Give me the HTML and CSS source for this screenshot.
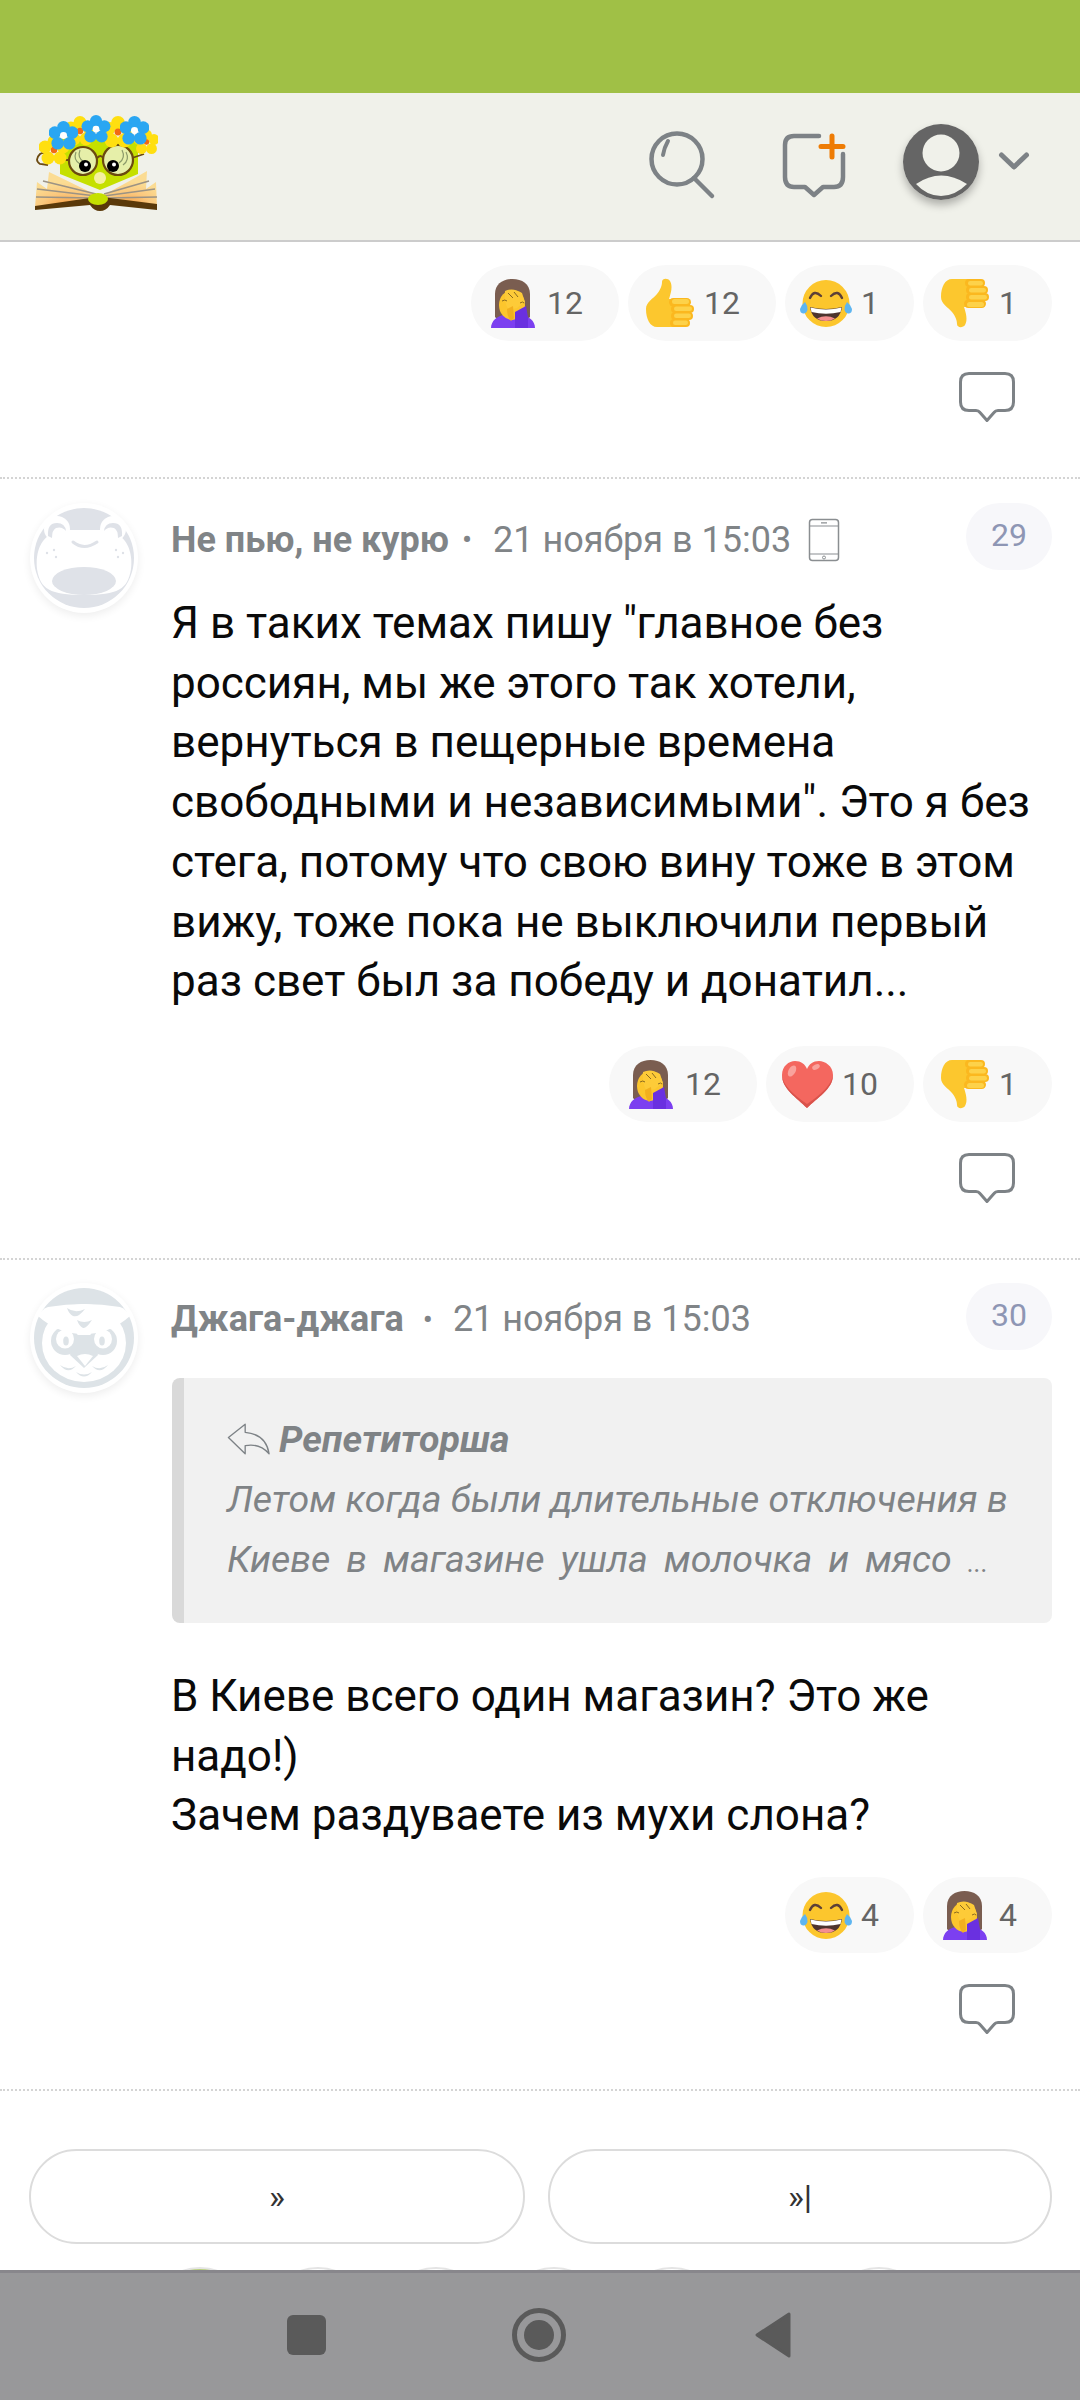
FILE: index.html
```html
<!DOCTYPE html>
<html lang="ru">
<head>
<meta charset="utf-8">
<title>Комментарии</title>
<link rel="stylesheet" href="styles.css">
</head>
<body>
<svg class="defs" aria-hidden="true">
  <defs>
    <radialGradient id="pageglow" cx="50%" cy="100%" r="70%">
      <stop offset="0" stop-color="#f79a3c"/><stop offset="0.55" stop-color="#fbc77c"/><stop offset="1" stop-color="#fbdc93"/>
    </radialGradient>
    <symbol id="flower-b" viewBox="0 0 30 30">
      <g fill="#2aa6f2">
        <circle cx="15" cy="6.5" r="6.5"/><circle cx="24" cy="12" r="6.5"/><circle cx="21" cy="23" r="6.5"/><circle cx="9" cy="23" r="6.5"/><circle cx="6" cy="12" r="6.5"/>
      </g>
      <circle cx="15" cy="15" r="3.6" fill="#fff"/>
    </symbol>
    <symbol id="flower-y" viewBox="0 0 30 30">
      <g fill="#ffdf10">
        <circle cx="15" cy="6.5" r="6.5"/><circle cx="24" cy="12" r="6.5"/><circle cx="21" cy="23" r="6.5"/><circle cx="9" cy="23" r="6.5"/><circle cx="6" cy="12" r="6.5"/>
      </g>
      <circle cx="15" cy="15" r="3.2" fill="#f26a12"/>
    </symbol>
    <symbol id="bubble" viewBox="0 0 56 50">
      <path d="M10 1.5H46Q54.5 1.5 54.5 10V30Q54.5 38.5 46 38.5H39Q36.5 38.5 35 40.5L28 48.5L21 40.5Q19.5 38.5 17 38.5H10Q1.5 38.5 1.5 30V10Q1.5 1.5 10 1.5Z" fill="none" stroke="#7d8286" stroke-width="3" stroke-linejoin="round"/>
    </symbol>
    <symbol id="e-face" viewBox="0 0 54 52">
      <path d="M10 40V17C10 7 18 2 27.500 2S45 7 45 17V40L42 43H13Z" fill="#7a5d50"/>
      <path d="M6 51C6 44 12 39 19 38H36C44 39 50 44 50 51Z" fill="#7c3ff0"/>
      <ellipse cx="27" cy="28" rx="13" ry="15" fill="#fcc62d"/>
      <path d="M20 14Q28 10 37 16L40 25Q35 28 32 31L24 33Q19 27 20 14Z" fill="#fdcb38"/>
      <path d="M22 32L28 29L29 41L26 44Q22 40 22 32Z" fill="#f2b01f"/>
      <path d="M30 35L41 29L43 40L43 51H30Z" fill="#6a30e0"/>
      <path d="M17 24q3 -2 5 0M35 26q3 -2 4 0M23 16l5 5M29 15l4 5" fill="none" stroke="#8a6a20" stroke-width="1"/>
    </symbol>
    <symbol id="e-up" viewBox="0 0 54 52">
      <path d="M4 32C4 25 11 22 15 17C19 12 20 8 20 5C20 1 26 1 28 4C31 9 29 16 27 22H36C38 22 38 49 36 50H15C8 50 4 42 4 32Z" fill="#fcc72e"/>
      <g fill="#fbb81f">
        <rect x="27" y="21" width="22" height="8.500" rx="4.200"/>
        <rect x="29" y="28" width="23" height="8" rx="4"/>
        <rect x="29" y="35" width="22" height="8" rx="4"/>
        <rect x="28" y="42" width="20" height="8" rx="4"/>
      </g>
      <g fill="#fdd24a">
        <rect x="30" y="22" width="17" height="5" rx="2.500"/>
        <rect x="32" y="29.500" width="18" height="4.500" rx="2.200"/>
        <rect x="32" y="36.500" width="17" height="4.500" rx="2.200"/>
        <rect x="31" y="43.500" width="15" height="4.500" rx="2.200"/>
      </g>
    </symbol>
    <symbol id="e-down" viewBox="0 0 54 52">
      <g transform="translate(0 52) scale(1 -1)"><use href="#e-up" width="54" height="52"/></g>
    </symbol>
    <symbol id="e-joy" viewBox="0 0 54 52">
      <circle cx="27" cy="26.500" r="23.500" fill="#fcc62d"/>
      <path d="M11 21Q15 12 22 19M32 19Q39 12 43 21" fill="none" stroke="#5d4037" stroke-width="2.400" stroke-linecap="round"/>
      <path d="M11 30Q27 34 43 30Q41 44 27 44Q13 44 11 30Z" fill="#4e342e"/>
      <path d="M11.500 30.500Q27 34.500 42.500 30.500L41.500 35Q27 38.500 12.500 35Z" fill="#fff"/>
      <path d="M18 41.500Q27 37 36 41.500Q32 44 27 44Q22 44 18 41.500Z" fill="#f58f8f"/>
      <path d="M1 32Q2 28 6 25Q9 29 8.500 33Q7 37 4 36.500Q1 36 1 32Z" fill="#5eb5f0"/>
      <path d="M53 32Q52 28 48 25Q45 29 45.500 33Q47 37 50 36.500Q53 36 53 32Z" fill="#5eb5f0"/>
    </symbol>
    <symbol id="e-heart" viewBox="0 0 54 52">
      <path d="M27 50C17 40 2 31 2 17C2 8 9 3 15 3C21 3 25 6 27 11C29 6 33 3 39 3C45 3 53 8 53 17C53 31 37 40 27 50Z" fill="#f4675f"/>
      <path d="M27 50C17 40 2 31 2 17Q3 30 27 46Q51 30 53 17C53 31 37 40 27 50Z" fill="#d9534c"/>
      <ellipse cx="12" cy="13" rx="3.500" ry="6" transform="rotate(30 12 13)" fill="#f9a29c"/>
      <ellipse cx="36" cy="9" rx="4" ry="2.500" transform="rotate(-25 36 9)" fill="#f9a29c"/>
    </symbol>
  </defs>
</svg>

<div class="statusbar"></div>

<header class="topbar">
  <svg class="logo" viewBox="24 23 124 96" width="124" height="96" role="img" aria-label="Логотип">
    <path d="M50 46H128V82L90 98L50 82Z" fill="#c5e000"/>
    <path d="M25 115L27 90L37 97L39 80Q60 90 88 104L90 112L80 108Z" fill="url(#pageglow)"/>
    <path d="M147 115L146 90L136 97L137 79Q118 90 92 104L90 112L100 108Z" fill="url(#pageglow)"/>
    <path d="M27 97L86 104M26 105L82 106M33 89L86 102M145 97L94 104M147 105L98 106M139 89L94 102" stroke="#9c9384" stroke-width="1.600" fill="none"/>
    <path d="M25 114L80 106Q90 104 100 106L147 112V118L100 113Q96 119 90 119Q84 119 80 113L25 118Z" fill="#5a390a"/>
    <ellipse cx="88" cy="107" rx="10" ry="6" fill="#c5e000"/>
    <ellipse cx="90" cy="86" rx="6" ry="6" fill="#f5f0a0"/>
    <path d="M59 68H47Q36 58 30 62Q24 68 30 72L38 73" fill="none" stroke="#6b4a10" stroke-width="1.800"/>
    <path d="M122 66L134 62" fill="none" stroke="#6b4a10" stroke-width="1.800"/>
    <circle cx="73" cy="69" r="14" fill="#e6efa9" stroke="#6b4a10" stroke-width="2.200"/>
    <circle cx="108" cy="68" r="15" fill="#e6efa9" stroke="#6b4a10" stroke-width="2.200"/>
    <path d="M87 66Q91 62 93 66" fill="none" stroke="#6b4a10" stroke-width="2"/>
    <path d="M66 60Q63 68 70 72M70 58Q67 66 74 70M112 58Q116 66 109 71M116 60Q120 68 113 73" fill="none" stroke="#8c9a6a" stroke-width="1.200"/>
    <circle cx="75" cy="74" r="6" fill="#000"/><circle cx="76" cy="72.500" r="2" fill="#fff"/>
    <circle cx="103" cy="74" r="6" fill="#000"/><circle cx="104" cy="72.500" r="2" fill="#fff"/>
    <use href="#flower-y" x="29" y="43" width="30" height="30"/>
    <use href="#flower-y" x="55" y="24" width="30" height="30"/>
    <use href="#flower-y" x="92" y="24" width="32" height="32"/>
    <use href="#flower-y" x="124" y="36" width="25" height="28"/>
    <use href="#flower-b" x="39" y="29" width="29" height="29"/>
    <use href="#flower-b" x="71" y="23" width="30" height="28"/>
    <use href="#flower-b" x="110" y="24" width="29" height="29"/>
  </svg>
  <div class="topbar-tools">
    <svg class="tool-search" viewBox="0 0 74 80" width="74" height="80" aria-hidden="true">
      <circle cx="32" cy="32" r="25.500" fill="none" stroke="#7d8286" stroke-width="4.500"/>
      <path d="M49 51L67 69" stroke="#7d8286" stroke-width="4.500" stroke-linecap="round"/>
      <path d="M18 28Q19 21 23 14" fill="none" stroke="#7d8286" stroke-width="4" stroke-linecap="round"/>
    </svg>
    <svg class="tool-new" viewBox="0 0 68 80" width="68" height="80" aria-hidden="true">
      <path d="M39 9H14Q5 9 5 18V50Q5 60 14 60H25L34 68L43 60H54Q63 60 63 50V27" fill="none" stroke="#7d8286" stroke-width="4.500" stroke-linecap="round" stroke-linejoin="round"/>
      <path d="M52 9V30M41 19.500H63" stroke="#ee7c05" stroke-width="5" stroke-linecap="round"/>
    </svg>
    <div class="tool-user">
      <svg class="user-pic" viewBox="0 0 76 76" width="76" height="76" aria-hidden="true">
        <circle cx="38" cy="38" r="38" fill="#656565"/>
        <circle cx="38" cy="29" r="18.500" fill="#f0f1ea"/>
        <path d="M13 60Q38 43 64 60Q52 72 38 72Q24 72 13 60Z" fill="#f0f1ea"/>
      </svg>
    </div>
    <svg class="tool-chevron" viewBox="0 0 36 24" width="36" height="24" aria-hidden="true">
      <path d="M5.500 5L18 17L30.500 5" fill="none" stroke="#7d8286" stroke-width="5" stroke-linecap="round" stroke-linejoin="round"/>
    </svg>
  </div>
</header>

<main>
  <section class="tail">
    <div class="reactions">
      <span class="pill pill-wide"><svg class="emoji"><use href="#e-face"/></svg><span class="cnt">12</span></span>
      <span class="pill pill-wide"><svg class="emoji"><use href="#e-up"/></svg><span class="cnt">12</span></span>
      <span class="pill"><svg class="emoji"><use href="#e-joy"/></svg><span class="cnt">1</span></span>
      <span class="pill"><svg class="emoji"><use href="#e-down"/></svg><span class="cnt">1</span></span>
    </div>
    <div class="reply"><svg class="bubble"><use href="#bubble"/></svg></div>
  </section>

  <article class="comment">
    <div class="ava">
      <svg viewBox="0 0 108 110" width="108" height="110" aria-hidden="true">
        <circle cx="54" cy="55" r="50" fill="#dfe2e8"/>
        <path d="M7 66C5 48 12 36 20 32L30 27H78L88 32C96 36 103 48 101 66C98 86 88 92 54 92C20 92 10 86 7 66Z" fill="#fff"/>
        <circle cx="27" cy="26" r="13" fill="#fff"/><circle cx="83" cy="26" r="13" fill="#fff"/>
        <path d="M18 33Q17 20 27 20Q35 20 36 28Q32 23 26 25Q22 27 22 35Z" fill="#dfe2e8"/>
        <path d="M92 33Q93 20 83 20Q75 20 74 28Q78 23 84 25Q88 27 88 35Z" fill="#dfe2e8"/>
        <path d="M43 39Q54 48 67 39" fill="none" stroke="#dfe2e8" stroke-width="3" stroke-linecap="round"/>
        <ellipse cx="54" cy="78" rx="32" ry="14" fill="#dfe2e8"/>
        <g fill="#dfe2e8"><circle cx="17" cy="50" r="1.200"/><circle cx="24" cy="47" r="1.200"/><circle cx="26" cy="54" r="1.200"/><circle cx="93" cy="50" r="1.200"/><circle cx="86" cy="47" r="1.200"/><circle cx="88" cy="54" r="1.200"/></g>
      </svg>
    </div>
    <div class="main">
      <div class="head">
        <div class="meta"><b class="name">Не пью, не курю</b><span class="dot dot-a">•</span><span class="date">21 ноября в 15:03</span>
          <svg class="phone" viewBox="0 0 32 44" width="32" height="44" aria-hidden="true">
            <rect x="1.500" y="1.500" width="29" height="41" rx="3" fill="none" stroke="#8a8e91" stroke-width="1.500"/>
            <path d="M2 8H30M2 36H30M13 4.800H19" stroke="#8a8e91" stroke-width="1.200" fill="none"/>
            <circle cx="16" cy="39.500" r="1.500" fill="none" stroke="#8a8e91"/>
          </svg>
        </div>
        <span class="num">29</span>
      </div>
      <p class="text">Я в таких темах пишу "главное без<br>россиян, мы же этого так хотели,<br>вернуться в пещерные времена<br>свободными и независимыми". Это я без<br>стега, потому что свою вину тоже в этом<br>вижу, тоже пока не выключили первый<br>раз свет был за победу и донатил...</p>
      <div class="reactions reactions-in">
        <span class="pill pill-wide"><svg class="emoji"><use href="#e-face"/></svg><span class="cnt">12</span></span>
        <span class="pill pill-wide"><svg class="emoji"><use href="#e-heart"/></svg><span class="cnt">10</span></span>
        <span class="pill"><svg class="emoji"><use href="#e-down"/></svg><span class="cnt">1</span></span>
      </div>
      <div class="reply reply-in"><svg class="bubble"><use href="#bubble"/></svg></div>
    </div>
  </article>

  <article class="comment comment-quoted">
    <div class="ava">
      <svg viewBox="0 0 108 110" width="108" height="110" aria-hidden="true">
        <circle cx="54" cy="55" r="50" fill="#dde3e7"/>
        <ellipse cx="54" cy="60" rx="42" ry="39" fill="#fff"/>
        <circle cx="35" cy="58" r="14" fill="#dde3e7"/>
        <circle cx="73" cy="58" r="14" fill="#dde3e7"/>
        <path d="M46 52H62L68 72L54 85L40 72Z" fill="#dde3e7"/>
        <ellipse cx="35" cy="56" rx="9" ry="9.500" fill="#fff"/>
        <ellipse cx="73" cy="56" rx="9" ry="9.500" fill="#fff"/>
        <ellipse cx="36" cy="58" rx="2.800" ry="4.500" fill="#dde3e7"/>
        <ellipse cx="72" cy="58" rx="2.800" ry="4.500" fill="#dde3e7"/>
        <path d="M47 73Q55 69 63 73L55 83Z" fill="#fff"/>
        <path d="M30 82Q38 88 46 83Q38 92 30 82ZM62 83Q70 88 78 82Q70 92 62 83ZM46 89Q54 94 62 89Q54 98 46 89Z" fill="#dde3e7"/>
        <path d="M8 33Q12 26 18 24Q54 18 90 24Q96 26 100 33Q80 51 54 51Q28 51 8 33Z" fill="#fff"/>
        <path d="M37 25Q45 31 55 26Q48 35 43 33Q39 31 37 25ZM47 37Q54 41 62 37Q56 46 53 45Q49 43 47 37Z" fill="#dde3e7"/>
      </svg>
    </div>
    <div class="main">
      <div class="head">
        <div class="meta"><b class="name">Джага-джага</b><span class="dot dot-b">•</span><span class="date">21 ноября в 15:03</span></div>
        <span class="num">30</span>
      </div>
      <blockquote class="quote">
        <div class="q-author">
          <svg class="q-arrow" viewBox="0 0 46 34" width="44" height="34" aria-hidden="true">
            <path d="M19 1.500L1.500 15.500L19 32.500V24Q34 21 44 32.500Q41 12 19 10Z" fill="none" stroke="#7d8286" stroke-width="1.400" stroke-linejoin="round"/>
          </svg><i>Репетиторша</i>
        </div>
        <div class="q-line">Летом когда были длительные отключения в</div>
        <div class="q-line q-spread">Киеве в магазине ушла молочка и мясо <span class="q-more">...</span></div>
      </blockquote>
      <p class="text text-after">В Киеве всего один магазин? Это же<br>надо!)<br>Зачем раздуваете из мухи слона?</p>
      <div class="reactions reactions-tight">
        <span class="pill"><svg class="emoji"><use href="#e-joy"/></svg><span class="cnt">4</span></span>
        <span class="pill"><svg class="emoji"><use href="#e-face"/></svg><span class="cnt">4</span></span>
      </div>
      <div class="reply reply-in"><svg class="bubble"><use href="#bubble"/></svg></div>
    </div>
  </article>

  <nav class="pager">
    <a class="pg pg-next">»</a>
    <a class="pg pg-last">»|</a>
  </nav>

  <div class="peek">
    <span class="peek-ava peek-green"></span><span class="peek-ava"></span><span class="peek-ava"></span><span class="peek-ava"></span><span class="peek-ava"></span><span class="peek-ava peek-far"></span>
  </div>
</main>

<footer class="sysnav">
  <svg class="sys-square" viewBox="0 0 40 40" width="40" height="40" aria-hidden="true"><rect width="39" height="40" rx="6" fill="#5a5a5a"/></svg>
  <svg class="sys-home" viewBox="0 0 54 54" width="54" height="54" aria-hidden="true"><circle cx="27" cy="27" r="24.500" fill="none" stroke="#5a5a5a" stroke-width="5"/><circle cx="27" cy="27" r="15" fill="#5a5a5a"/></svg>
  <svg class="sys-back" viewBox="0 0 36 46" width="36" height="46" aria-hidden="true"><path d="M34 2V44L2 23Z" fill="#5a5a5a" stroke="#5a5a5a" stroke-width="3" stroke-linejoin="round"/></svg>
</footer>
</body>
</html>
```

FILE: styles.css
```css
* { box-sizing: border-box; }
html, body { margin: 0; padding: 0; }
body {
  width: 1080px;
  height: 2400px;
  overflow: hidden;
  background: #fff;
  font-family: Roboto, "Noto Sans", sans-serif;
  color: #000;
}
.defs { position: absolute; width: 0; height: 0; }

.statusbar { height: 93px; background: #a0c046; }

.topbar {
  height: 149px;
  background: #f0f1ea;
  border-bottom: 2px solid #cccccc;
  display: flex;
  align-items: center;
  justify-content: space-between;
  padding: 0 48px 0 34px;
}
.logo { display: block; margin-top: -8px; }
.topbar-tools { display: flex; align-items: center; }
.tool-search, .tool-new, .tool-chevron { display: block; }
.tool-search { margin-right: 61px; }
.tool-new { margin-right: 55px; }
.tool-user { width: 76px; height: 76px; border-radius: 50%; box-shadow: 0 5px 8px rgba(0,0,0,.28); margin-top: -9px; }
.user-pic { display: block; }
.tool-chevron { margin-left: 17px; margin-top: -9px; }

.reactions { display: flex; justify-content: flex-end; gap: 9px; }
.tail { padding: 23px 28px 55px 0; }
.pill {
  height: 76px;
  width: 129px;
  padding-left: 14px;
  border-radius: 38px;
  background: #f8f8f8;
  display: flex;
  align-items: center;
  gap: 8px;
}
.pill-wide { width: 148px; }
.emoji { width: 54px; height: 52px; display: block; flex: none; }
.cnt { font-size: 32px; color: #656565; }
.reply { display: flex; justify-content: flex-end; padding: 31px 37px 0 0; }
.bubble { width: 56px; height: 50px; display: block; }

.comment {
  border-top: 2px dotted #d4d4d4;
  display: flex;
  padding: 24px 28px 55px 30px;
}
.comment-quoted { padding-top: 23px; }
.ava { width: 141px; flex: none; }
.ava svg { display: block; border-radius: 50%; background: #fff; box-shadow: 0 3px 9px rgba(0,0,0,.07); }
.main { width: 881px; }
.head { height: 67px; display: flex; justify-content: space-between; align-items: center; }
.meta { display: flex; align-items: center; font-size: 36px; color: #808487; margin-top: 6px; }
.name { font-weight: 700; }
.dot { font-size: 30px; }
.dot-a { margin: 0 21px 0 13px; }
.dot-b { margin: 0 20px 0 19px; }
.phone { margin-left: 17px; display: block; }
.num {
  width: 86px;
  height: 67px;
  padding-bottom: 3px;
  border-radius: 34px;
  background: #f7f7fa;
  color: #8e96b4;
  font-size: 32px;
  display: flex;
  align-items: center;
  justify-content: center;
}
.text { margin: 24px 0 0; font-size: 44px; line-height: 59.7px; color: #0a0a0a; }
.text-after { margin-top: 44px; }
.reactions-in { margin-top: 34px; }
.reactions-tight { margin-top: 31px; }
.reply-in { padding-right: 37px; }

.quote {
  margin: 28px 0 0 1px;
  height: 245px;
  background: #f1f1f1;
  border-left: 12px solid #d9d9d9;
  border-radius: 8px;
  padding: 31px 20px 0 43px;
  font-style: italic;
  color: #7f8386;
  font-size: 37.5px;
  line-height: 60px;
}
.q-author { display: flex; align-items: center; height: 60px; font-weight: 700; }
.q-author i { font-style: italic; }
.q-arrow { display: block; margin-right: 8px; }
.q-line { white-space: nowrap; }
.q-spread { word-spacing: 6.7px; }
.q-more { font-size: 27px; }

.pager { display: flex; gap: 23px; padding: 58px 28px 0 29px; border-top: 2px dotted #d4d4d4; }
.pg {
  height: 95px;
  border: 2px solid #dcdcdc;
  border-radius: 48px;
  display: flex;
  align-items: center;
  justify-content: center;
  font-size: 34px;
  color: #333;
}
.pg-next { width: 496px; }
.pg-last { width: 504px; }

.peek { height: 26px; padding: 23px 0 0 148px; display: flex; gap: 14px; overflow: hidden; }
.peek-ava { width: 104px; height: 104px; flex: none; border-radius: 50%; border: 2px solid #e4e4e4; background: #fff; }
.peek-green { background: #b9cf7c; }
.peek-far { margin-left: 89px; }

.sysnav {
  height: 130px;
  background: #98989a;
  border-top: 3px solid #88878c;
  display: flex;
  align-items: center;
  padding: 0 0 3px 287px;
}
.sys-square { margin-right: 185px; display: block; }
.sys-home { margin-right: 189px; display: block; }
.sys-back { display: block; }
```
